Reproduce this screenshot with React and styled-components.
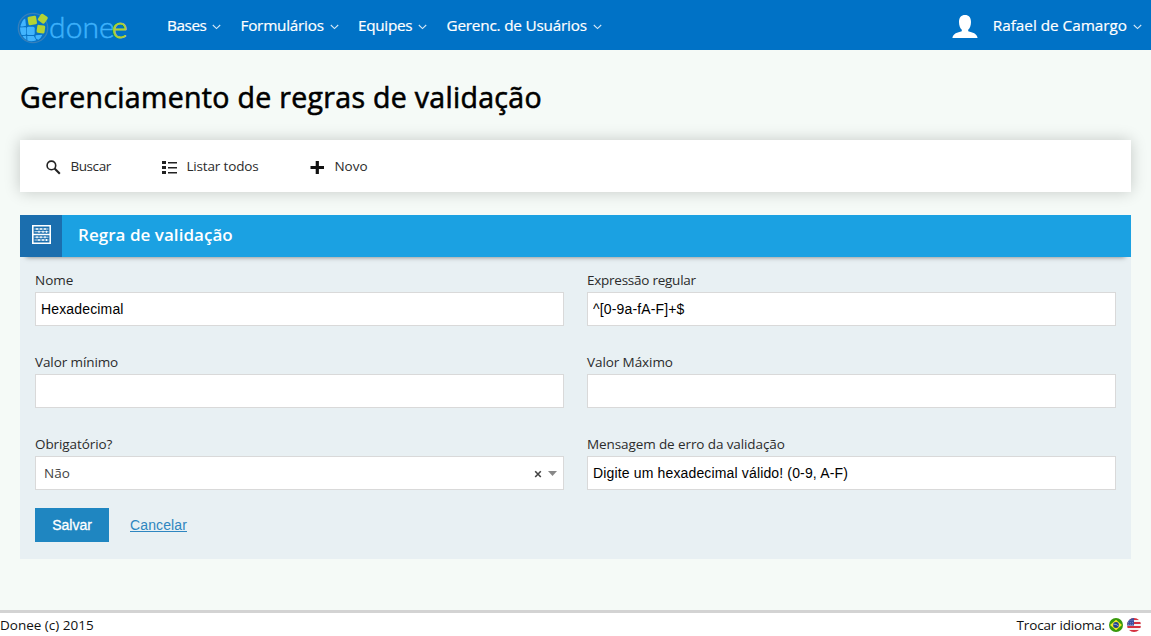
import React from "react";
import styled, { createGlobalStyle } from "styled-components";

const GlobalStyle = createGlobalStyle`
  * { box-sizing: border-box; }
  html, body { margin: 0; padding: 0; }
  body {
    background: #f5faf7;
    font-family: "Open Sans", "Noto Sans", sans-serif;
    font-size: 13.5px;
    color: #2b2b2b;
    overflow: hidden;
  }
`;

const Page = styled.div`
  height: 636px;
  display: flex;
  flex-direction: column;
`;

const TopBar = styled.header`
  height: 50px;
  background: #0072c6;
  display: flex;
  align-items: center;
  padding: 0 9px 0 17px;
  color: #fff;
`;

const Brand = styled.div`
  width: 150px;
  height: 50px;
  display: flex;
  align-items: center;
`;

const GlobeIcon = styled.svg`
  width: 32px;
  height: 32px;
  margin-top: 5px;
  flex: none;
`;

const BrandText = styled.span`
  font: 300 30px/34px "Lato", sans-serif;
  color: #3db1fb;
  margin: 2px 0 0 0;
  letter-spacing: 0.1px;
  white-space: nowrap;
  -webkit-text-stroke: 0.5px currentColor;
`;

const BrandAccent = styled.span`
  color: #b0d136;
  margin-left: -3px;
  -webkit-text-stroke: 0.9px currentColor;
`;

const Nav = styled.nav`
  display: grid;
  grid-template-columns: 73.5px 117.5px 88.5px auto;
  flex: 1;
`;

const NavItem = styled.a`
  display: flex;
  align-items: center;
  gap: 6px;
  font-size: 15.3px;
  line-height: 22px;
  letter-spacing: ${(p) => p.$spacing || "0"};
  color: #fff;
  white-space: nowrap;
  -webkit-text-stroke: 0.2px #fff;
`;

const CaretIcon = styled.svg`
  width: 9px;
  height: 6px;
  margin-top: 4px;
  flex: none;
`;

const UserIcon = styled.svg`
  width: 26px;
  height: 24px;
  margin: 4px 15px 0 0;
`;

const Main = styled.main`
  flex: 1;
  padding: 0 20px;
`;

const Title = styled.h1`
  margin: 27px 0 23px;
  font-size: 28.5px;
  line-height: 40px;
  font-weight: 400;
  letter-spacing: 0.31px;
  color: #000;
  white-space: nowrap;
  -webkit-text-stroke: 0.6px #000;
`;

const Toolbar = styled.div`
  height: 52px;
  background: #fff;
  box-shadow: 0 0 15px rgba(0, 0, 0, 0.2);
  display: grid;
  grid-template-columns: 116px 148px auto;
  align-items: center;
  padding-left: 26px;
`;

const Tool = styled.a`
  display: flex;
  align-items: center;
  gap: 9.4px;
  line-height: 20px;
  letter-spacing: ${(p) => p.$spacing || "0"};
`;

const ToolIcon = styled.svg`
  width: 15px;
  height: 15px;
  margin-top: 3px;
`;

const Panel = styled.section`
  margin-top: 23px;
  height: 344px;
  background: #e8f0f3;
`;

const PanelHeader = styled.div`
  height: 42px;
  display: flex;
  background: #1ba1e2;
  box-shadow: 0 6px 5px -6px rgba(0, 0, 0, 0.5);
`;

const PanelBadge = styled.div`
  width: 42px;
  background: #1b6eae;
  display: flex;
  align-items: center;
  justify-content: center;
  padding-bottom: 3px;
`;

const PanelTitle = styled.h2`
  margin: 0 0 0 16px;
  font-size: 17px;
  line-height: 39px;
  font-weight: 600;
  letter-spacing: 0.04px;
  color: #fff;
`;

const Fields = styled.div`
  display: grid;
  grid-template-columns: 529px 529px;
  column-gap: 23px;
  row-gap: 28px;
  padding: 15px 15px 0;
`;

const Field = styled.label`
  display: flex;
  flex-direction: column;
`;

const Label = styled.span`
  line-height: 16px;
  height: 20px;
  letter-spacing: ${(p) => p.$spacing || "0"};
`;

const Input = styled.input`
  height: 34px;
  border: 1px solid #d9d9d9;
  border-radius: 0;
  background: #fff;
  padding: 0 5px;
  font: 14px "Liberation Sans", Arial, sans-serif;
  letter-spacing: 0.15px;
  color: #000;
  outline: none;
`;

const Select = styled.div`
  height: 34px;
  border: 1px solid #d9d9d9;
  background: #fff;
  display: flex;
  align-items: center;
  justify-content: space-between;
  padding: 0 6px 0 8px;
  color: #444;
`;

const SelectTools = styled.svg`
  width: 24px;
  height: 10px;
  margin-top: 2px;
`;

const Actions = styled.div`
  display: flex;
  align-items: center;
  gap: 21px;
  padding: 18px 15px 0;
  font: 14px "Liberation Sans", Arial, sans-serif;
`;

const SaveButton = styled.button`
  width: 74px;
  height: 34px;
  border: 0;
  padding: 0;
  background: #1f86c1;
  color: #fff;
  font: inherit;
  -webkit-text-stroke: 0.3px #fff;
`;

const CancelLink = styled.a`
  color: #2e86c0;
  letter-spacing: 0.12px;
  text-decoration: underline;
`;

const Footer = styled.footer`
  height: 26px;
  border-top: 3px solid #d3d3d3;
  background: #fff;
  color: #111;
  display: flex;
  justify-content: space-between;
  align-items: center;
  padding: 1px 10px 0 0;
  line-height: 18px;
`;

const FooterText = styled.span`
  letter-spacing: ${(p) => p.$spacing || "0"};
`;

const Languages = styled.div`
  display: flex;
  align-items: center;
  gap: 4px;
`;

const Caret = () => (
  <CaretIcon viewBox="0 0 9 6">
    <path d="M0.8 1 L4.5 4.6 L8.2 1" fill="none" stroke="#d5e8f6" strokeWidth="1.1" />
  </CaretIcon>
);

const Globe = () => (
  <GlobeIcon viewBox="0 0 32 32">
    <circle cx="16" cy="16" r="14.7" fill="#0873c5" stroke="#3680bb" strokeWidth="1.3" />
    <g fill="#42b4fd">
      <path d="M3.6 13.6 Q5.2 8 8.2 6.4 L9 13.8 Q6 14.8 3.6 14.4 Z" />
      <path d="M3 15.4 Q6 15 9 15.2 V22.5 Q6.5 23.5 4.5 22.8 Q3 19.5 3 15.4Z" />
      <rect x="9.7" y="14.8" width="8" height="8.2" rx="1.6" />
      <path d="M18.6 23.3 L25.4 22.8 Q24 26.2 21.5 27.8 Q19 27.4 18.5 24.9Z" />
      <path d="M5.5 24 L9.2 23.7 L9.4 28 Q7 26.7 5.5 24Z" />
      <path d="M10.2 23.9 H16.8 L19.3 28.2 Q15 30.2 10.4 28.6Z" />
    </g>
    <g fill="#b3d335">
      <rect x="11" y="4.2" width="8.6" height="8.6" rx="1.5" transform="rotate(-9 15.3 8.5)" />
      <rect x="21.8" y="2.7" width="8" height="8" rx="1.5" transform="rotate(35 25.8 6.7)" />
      <rect x="19.9" y="13.2" width="8" height="8" rx="1.5" transform="rotate(8 23.9 17.2)" />
    </g>
  </GlobeIcon>
);

const Brazil = () => (
  <svg width="14" height="14" viewBox="0 0 14 14">
    <circle cx="7" cy="7" r="7" fill="#37980b" />
    <path d="M7 1.8 L13 7 L7 12.2 L1 7Z" fill="#f2e82a" />
    <circle cx="7" cy="7" r="2.9" fill="#22408f" />
    <path d="M4.4 6.2 Q7.3 5.8 9.5 8" stroke="#a9c0dc" strokeWidth="0.8" fill="none" />
  </svg>
);

const UnitedStates = () => (
  <svg width="14" height="14" viewBox="0 0 14 14">
    <clipPath id="us"><circle cx="7" cy="7" r="7" /></clipPath>
    <g clipPath="url(#us)">
      <rect width="14" height="14" fill="#f5f0f1" />
      <path d="M0 1H14M0 5H14M0 9H14M0 13H14" stroke="#d5303f" strokeWidth="2" />
      <rect width="7" height="7.6" fill="#3b4fa0" />
      <path d="M1.5 2.5H6.5M1 4.6H6.5M1 6.5H6.5" stroke="#8590c6" strokeWidth="0.7" strokeDasharray="1 1" />
    </g>
  </svg>
);

export default function App() {
  return (
    <Page>
      <GlobalStyle />
      <TopBar>
        <Brand>
          <Globe />
          <BrandText>done<BrandAccent>e</BrandAccent></BrandText>
        </Brand>
        <Nav>
          <NavItem $spacing="-0.42px">Bases<Caret /></NavItem>
          <NavItem $spacing="-0.24px">Formulários<Caret /></NavItem>
          <NavItem $spacing="-0.3px">Equipes<Caret /></NavItem>
          <NavItem $spacing="-0.2px">Gerenc. de Usuários<Caret /></NavItem>
        </Nav>
        <UserIcon viewBox="0 0 26 24">
          <path d="M13 0 C16.8 0 19 2.5 19 7 C19 10.5 17.8 13.4 16.2 14.8 V16.2 C20.5 17.5 25 18.3 25.6 23 H0.4 C1 18.3 5.5 17.5 9.8 16.2 V14.8 C8.2 13.4 7 10.5 7 7 C7 2.5 9.2 0 13 0Z" fill="#fff" />
        </UserIcon>
        <NavItem $spacing="-0.02px">Rafael de Camargo<Caret /></NavItem>
      </TopBar>
      <Main>
        <Title>Gerenciamento de regras de validação</Title>
        <Toolbar>
          <Tool $spacing="-0.4px">
            <ToolIcon viewBox="0 0 15 15">
              <circle cx="5.4" cy="5.4" r="4.3" fill="none" stroke="#222" strokeWidth="1.6" />
              <path d="M8.6 8.6 L13.8 13.8" stroke="#222" strokeWidth="2.1" />
            </ToolIcon>
            Buscar
          </Tool>
          <Tool $spacing="-0.15px">
            <ToolIcon viewBox="0 0 15 15">
              <path d="M0 1H4V4H0ZM0 6H4V9H0ZM0 11H4V14H0Z M6 2H15V3.4H6Z M6 7H15V8.4H6Z M6 12H15V13.4H6Z" fill="#222" />
            </ToolIcon>
            Listar todos
          </Tool>
          <Tool>
            <ToolIcon viewBox="0 0 15 15">
              <path d="M5.7 1H8.9V5.9H14V9H8.9V14H5.7V9H0.5V5.9H5.7Z" fill="#111" />
            </ToolIcon>
            Novo
          </Tool>
        </Toolbar>
        <Panel>
          <PanelHeader>
            <PanelBadge>
              <svg width="19" height="19" viewBox="0 0 19 19">
                <path d="M0.8 0.8H18.2V18.2H0.8ZM0 9.5H19" fill="none" stroke="#fff" strokeWidth="1.6" />
                <path d="M2.5 4H16.5M2.5 6.7H16.5M2.5 12.2H16.5M2.5 15H16.5" stroke="#d8e8f3" strokeWidth="0.9" />
                <path d="M5 3V5M9 3V5M13 3V5M7 5.7V7.7M11 5.7V7.7M14.5 5.7V7.7M5 11.2V13.2M9 11.2V13.2M13 11.2V13.2M7 14V16M11 14V16M14.5 14V16" stroke="#fff" strokeWidth="1.3" />
              </svg>
            </PanelBadge>
            <PanelTitle>Regra de validação</PanelTitle>
          </PanelHeader>
          <Fields>
            <Field><Label>Nome</Label><Input defaultValue="Hexadecimal" /></Field>
            <Field><Label $spacing="-0.25px">Expressão regular</Label><Input defaultValue="^[0-9a-fA-F]+$" /></Field>
            <Field><Label $spacing="-0.1px">Valor mínimo</Label><Input /></Field>
            <Field><Label $spacing="-0.08px">Valor Máximo</Label><Input /></Field>
            <Field>
              <Label $spacing="-0.08px">Obrigatório?</Label>
              <Select>
                Não
                <SelectTools viewBox="0 0 24 10">
                  <path d="M2.2 2.2 L7.8 8 M7.8 2.2 L2.2 8" stroke="#444" strokeWidth="1.6" />
                  <path d="M15 2H24L19.5 7Z" fill="#888" />
                </SelectTools>
              </Select>
            </Field>
            <Field><Label $spacing="-0.1px">Mensagem de erro da validação</Label><Input defaultValue="Digite um hexadecimal válido! (0-9, A-F)" /></Field>
          </Fields>
          <Actions>
            <SaveButton>Salvar</SaveButton>
            <CancelLink>Cancelar</CancelLink>
          </Actions>
        </Panel>
      </Main>
      <Footer>
        <FooterText>Donee (c) 2015</FooterText>
        <Languages>
          <FooterText $spacing="-0.17px">Trocar idioma:</FooterText>
          <Brazil />
          <UnitedStates />
        </Languages>
      </Footer>
    </Page>
  );
}
